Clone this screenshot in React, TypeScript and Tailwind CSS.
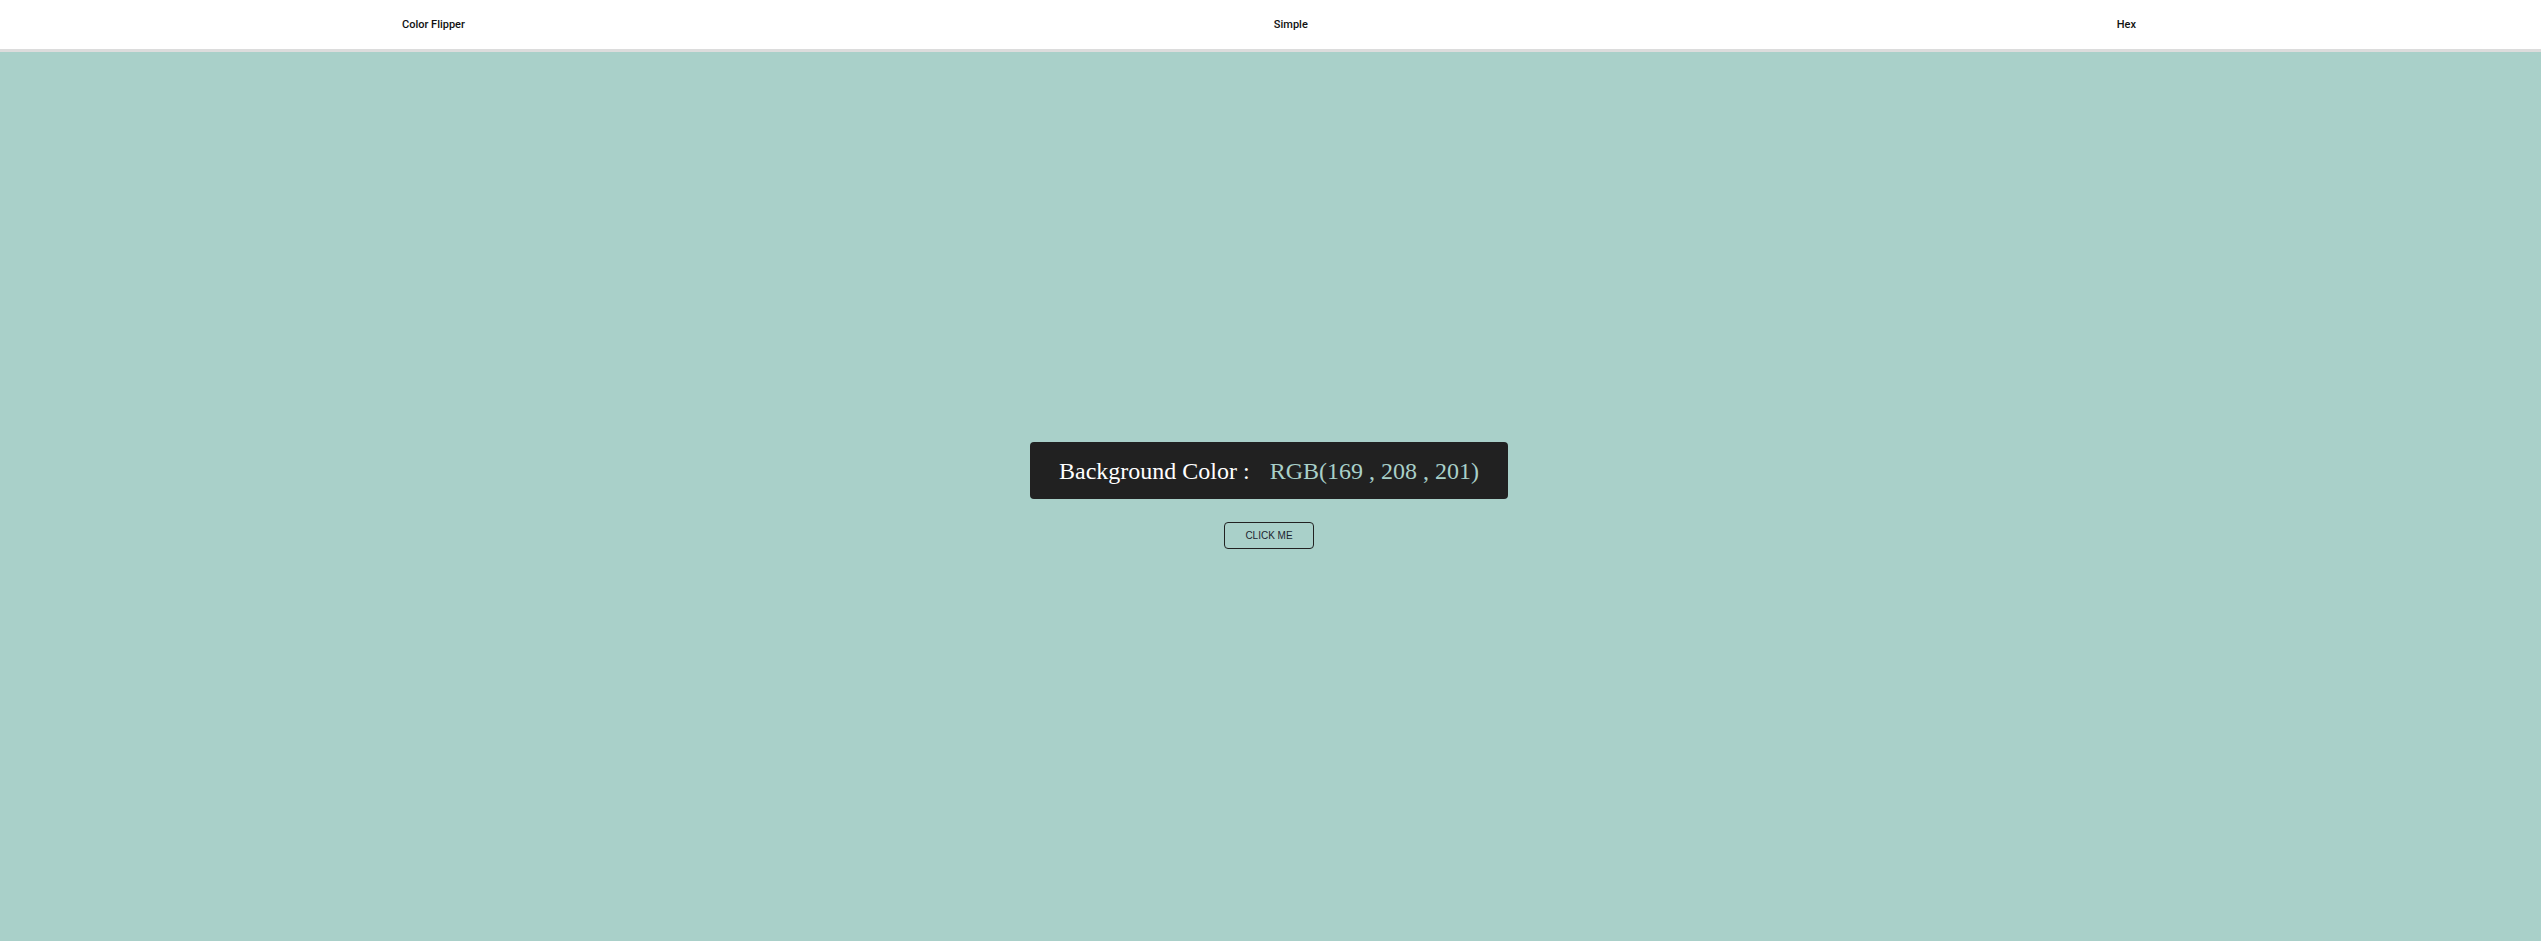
import React, { useState } from 'react';

const randomColor = () => {
  const c = () => Math.floor(Math.random() * 256);
  return [c(), c(), c()] as [number, number, number];
};

const App: React.FC = () => {
  const [rgb, setRgb] = useState<[number, number, number]>([169, 208, 201]);
  const color = `rgb(${rgb[0]}, ${rgb[1]}, ${rgb[2]})`;

  return (
    <div className="flex flex-col h-[941px] w-full" style={{ backgroundColor: color }}>
      {/* Navbar */}
      <nav className="relative z-10 flex items-center justify-between h-[52px] pt-[2px] pl-[402px] pr-[405px] bg-white border-b-[3px] border-[#dcdcdc] text-[11px] text-[#111] font-['Roboto',Arial,sans-serif]">
        <a href="#" className="font-medium">Color Flipper</a>
        <a href="#" className="font-medium">Simple</a>
        <a href="#" className="font-medium">Hex</a>
      </nav>

      {/* Main */}
      <main className="flex-1 flex flex-col items-center justify-center pr-[3px] pb-[2px]">
        <h2 className="flex items-center h-[57px] px-[29px] rounded-[4px] bg-[#212121] text-white text-[24px] leading-none font-['Liberation_Serif','Times_New_Roman',serif]">
          Background Color :
          <span className="ml-[20px]" style={{ color }}>
            RGB({rgb[0]} , {rgb[1]} , {rgb[2]})
          </span>
        </h2>
        <button
          onClick={() => setRgb(randomColor())}
          className="mt-[23px] w-[90px] h-[27px] rounded-[4px] border border-[#222] bg-transparent text-[10px] text-[#1c2530] font-['Liberation_Sans',Arial,sans-serif] cursor-pointer"
        >
          CLICK ME
        </button>
      </main>
    </div>
  );
};

export default App;
